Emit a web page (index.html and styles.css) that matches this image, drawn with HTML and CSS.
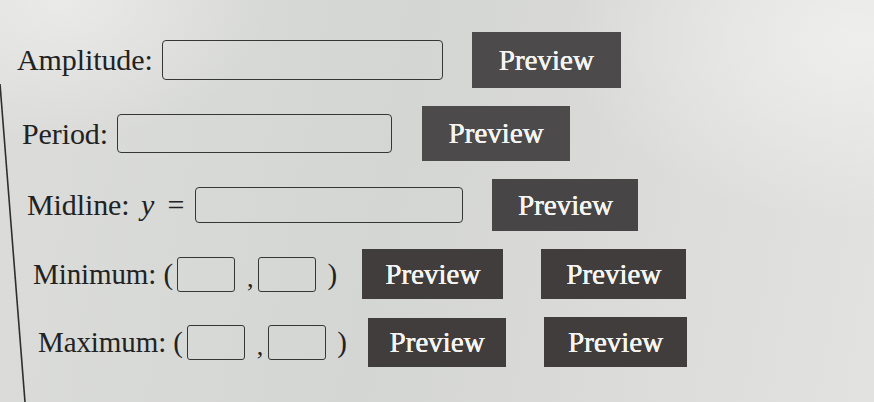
FILE: index.html
```html
<!DOCTYPE html>
<html lang="en">
<head>
    <meta charset="UTF-8">
    <meta name="viewport" content="width=device-width, initial-scale=1.0">
    <title>Sinusoid Features</title>
    <link rel="stylesheet" href="styles.css">
</head>
<body>
    <!-- edge of the question panel -->
    <svg class="panel-edge" width="874" height="402" viewBox="0 0 874 402">
        <line x1="0" y1="84" x2="25" y2="402" stroke="#2e2e2e" stroke-width="1.6"/>
    </svg>

    <div class="form">
        <div class="row row-amp">
            <label class="label">Amplitude:</label>
            <input class="field field-amp" type="text">
            <button class="preview btn-amp">Preview</button>
        </div>

        <div class="row row-per">
            <label class="label">Period:</label>
            <input class="field field-per" type="text">
            <button class="preview btn-per">Preview</button>
        </div>

        <div class="row row-mid">
            <label class="label">Midline: <span class="math">y</span> <span class="eq">=</span></label>
            <input class="field field-mid" type="text">
            <button class="preview btn-mid">Preview</button>
        </div>

        <div class="row row-min">
            <label class="label label-pt">Minimum: (</label>
            <input class="field field-pt" type="text">
            <span class="comma">,</span>
            <input class="field field-pt" type="text">
            <span class="paren">)</span>
            <button class="preview btn-pt">Preview</button>
            <button class="preview btn-pt btn-second">Preview</button>
        </div>

        <div class="row row-max">
            <label class="label label-pt">Maximum: (</label>
            <input class="field field-pt" type="text">
            <span class="comma">,</span>
            <input class="field field-pt" type="text">
            <span class="paren">)</span>
            <button class="preview btn-pt btn-max">Preview</button>
            <button class="preview btn-pt btn-second btn-second-max">Preview</button>
        </div>
    </div>
</body>
</html>
```

FILE: styles.css
```css
body {
    margin: 0;
    height: 402px;
    overflow: hidden;
    font-family: "Liberation Serif", "Times New Roman", serif;
    color: #222;
    background:
        radial-gradient(ellipse 420px 260px at 860px 40px, rgba(240, 240, 238, 0.9), rgba(240, 240, 238, 0) 70%),
        radial-gradient(ellipse 300px 200px at 60px 0px, rgba(236, 236, 234, 0.9), rgba(236, 236, 234, 0) 70%),
        linear-gradient(100deg, #dcdddb 0%, #d4d6d3 45%, #dcdcda 75%, #e2e2e0 100%);
}
.panel-edge {
    position: absolute;
    top: 0;
    left: 0;
    pointer-events: none;
}
.form {
    display: flex;
    flex-direction: column;
    gap: 18px;
    padding-top: 32px;
}
.row {
    display: flex;
    align-items: center;
}
.label {
    font-size: 30px;
    white-space: nowrap;
    letter-spacing: -0.1px;
}
.label-pt {
    font-size: 29px;
}
.math {
    font-style: italic;
    margin-left: 4px;
}
.eq {
    margin-left: 6px;
}
.field {
    box-sizing: border-box;
    border: 1.8px solid #363636;
    border-radius: 4px;
    background: transparent;
    padding: 0;
    outline: none;
}
.preview {
    box-sizing: border-box;
    border: none;
    border-radius: 0;
    background-color: #4c4a4a;
    color: #f4f4f2;
    font-family: "Liberation Serif", "Times New Roman", serif;
    font-size: 29px;
    font-weight: normal;
    text-shadow: 0 0 0.6px #f4f4f2, 0.4px 0 0 #f4f4f2;
    padding: 0;
    cursor: pointer;
}
.preview:hover {
    background-color: #3e3c3c;
}

/* rows sit a little further right the lower they are */
.row-amp { padding-left: 17px; }
.row-per { padding-left: 22px; }
.row-mid { padding-left: 27px; }
.row-min { padding-left: 33px; }
.row-max { padding-left: 38px; }

.field-amp { width: 281px; height: 40px; margin-left: 9px; }
.btn-amp { width: 149px; height: 56px; margin-left: 29px; }

.field-per { width: 275px; height: 39px; margin-left: 9px; }
.btn-per { width: 148px; height: 55px; margin-left: 30px; }

.field-mid { width: 268px; height: 36px; margin-left: 11px; }
.btn-mid { width: 146px; height: 52px; margin-left: 29px; background-color: #474545; }

.field-pt { width: 58px; height: 35px; margin-left: 4px; border-radius: 3px; }
.comma {
    font-size: 26px;
    margin: 10px 5px 0 12px;
}
.comma + .field-pt { margin-left: 0; }
.paren {
    font-size: 29px;
    margin-left: 11px;
}
.btn-pt {
    width: 141px;
    height: 50px;
    margin-left: 25px;
    background-color: #403d3c;
}
.btn-max { width: 138px; height: 49px; margin-left: 21px; }
.btn-second { width: 145px; margin-left: 38px; }
.btn-second-max { width: 143px; margin-left: 38px; }
```
